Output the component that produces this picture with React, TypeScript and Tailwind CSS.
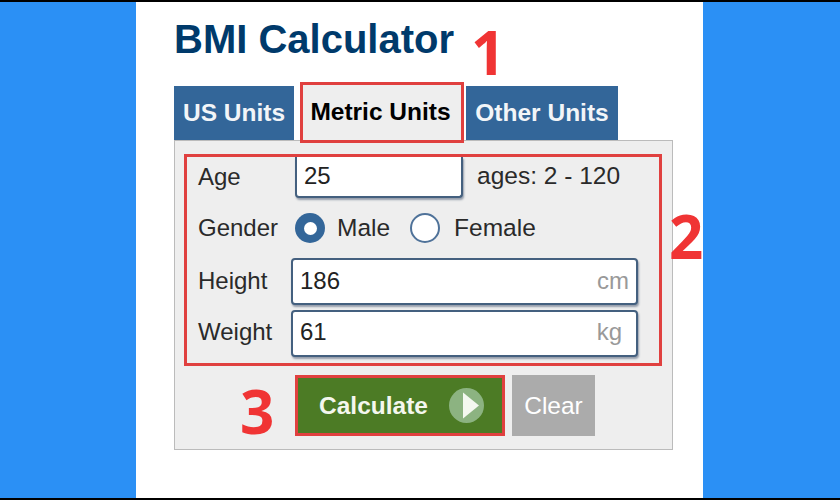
import React from "react";

const RED = "border-[#e0403f]";

// Text field with the unit shown at the right side.
const Field = ({ label, value, unit, extra }: { label: string; value: string; unit: string; extra: string }) => {
  return (
    <div className="flex items-center h-[47px]">
      <div className={`w-[104px] pl-[11px] text-[24px] text-[#2a2a2a] ${extra}`}>{label}</div>
      <div className={`w-[347px] h-[47px] bg-white border-2 border-[#44607f] rounded-[4px] shadow-[1px_2px_2px_rgba(40,60,90,0.45)] flex items-center justify-between pl-[7px] ${extra}`}>
        <span className="text-[24px] text-[#222]">{value}</span>
        <span className={`text-[24px] text-[#999] ${unit === "kg" ? "pr-[14px]" : "pr-[7px]"}`}>{unit}</span>
      </div>
    </div>
  );
};

const Radio = ({ checked }: { checked: boolean }) => {
  return checked ? (
    <span className="w-[30px] h-[30px] rounded-full bg-[#336699] flex items-center justify-center">
      <span className="w-[13px] h-[13px] rounded-full bg-white" />
    </span>
  ) : (
    <span className="w-[30px] h-[30px] rounded-full bg-white border-2 border-[#4f7299]" />
  );
};

export default function App() {
  return (
    <div className="w-[840px] h-[500px] bg-black py-[2px] font-['Liberation_Sans',Arial,sans-serif]">
      <div className="flex h-[496px]">
        <div className="w-[136px] bg-[#2b90f5]" />
        <div className="relative w-[567px] bg-white pl-[38px]">
          <h1 className="h-[80px] pt-[12px] text-[40px] leading-[50px] font-bold text-[#003a6b]">
            BMI Calculator
          </h1>

          {/* Tabs */}
          <div className="flex items-end h-[58px]">
            <div className="w-[120px] h-[54px] bg-[#336699] text-[#f2f5f8] text-[24.5px] font-bold flex items-center justify-center">
              US Units
            </div>
            <div className={`relative z-10 -mb-[3px] ml-[6px] w-[164px] h-[61px] bg-[#eeeeee] border-[3px] ${RED} pr-[3px] text-black text-[24.5px] font-bold flex items-center justify-center`}>
              Metric Units
            </div>
            <div className="ml-[2px] w-[152px] h-[54px] bg-[#336699] text-[#f2f5f8] text-[24.5px] font-bold flex items-center justify-center">
              Other Units
            </div>
          </div>

          {/* Form panel */}
          <div className="w-[499px] h-[310px] bg-[#eeeeee] border border-[#bbbbbb] pl-[9px] pt-[13px]">
            <div className={`w-[478px] h-[212px] border-[3px] ${RED}`}>
              <div className="flex items-center h-[41px]">
                <div className="w-[108px] pl-[11px] pb-[2px] text-[24px] text-[#2a2a2a]">Age</div>
                <div className="w-[168px] h-[41px] bg-white border-2 border-t-0 border-[#44607f] rounded-b-[4px] shadow-[1px_2px_2px_rgba(40,60,90,0.45)] flex items-center pl-[7px] pb-[2px] text-[24px] text-[#222]">
                  25
                </div>
                <div className="ml-[14px] pb-[2px] text-[24.5px] text-[#2a2a2a]">ages: 2 - 120</div>
              </div>
              <div className="flex items-center h-[60px]">
                <div className="w-[108px] pl-[11px] text-[24px] text-[#2a2a2a]">Gender</div>
                <Radio checked={true} />
                <span className="ml-[12px] text-[24.5px] text-[#2a2a2a]">Male</span>
                <span className="ml-[20px] flex">
                  <Radio checked={false} />
                </span>
                <span className="ml-[14px] text-[24.5px] text-[#2a2a2a]">Female</span>
              </div>
              <Field label="Height" value="186" unit="cm" extra="pb-[2px]" />
              <div className="mt-[5px]">
                <Field label="Weight" value="61" unit="kg" extra="pb-[4px]" />
              </div>
            </div>

            <div className="flex mt-[9px] ml-[111px]">
              <div className={`w-[210px] h-[61px] bg-[#4c7b25] border-[3px] ${RED} flex items-center pl-[21px]`}>
                <span className="pt-[1px] text-[24.5px] font-bold text-[#f4f7ee]">Calculate</span>
                <svg className="ml-[21px]" width="35" height="35" viewBox="0 0 35 35">
                  <circle cx="17.5" cy="17.5" r="17.5" fill="#8cb381" />
                  <path d="M14 4.5 L30 17.5 L14 30.5 Z" fill="#f4f8f0" />
                </svg>
              </div>
              <div className="ml-[7px] pt-[1px] w-[83px] h-[61px] bg-[#ababab] text-white text-[24.5px] flex items-center justify-center">
                Clear
              </div>
            </div>
          </div>

          {/* Step numbers drawn over the page */}
          <span className="absolute left-[335px] top-[15px] text-[60px] leading-[70px] font-bold text-[#f03434] font-['Open_Sans',sans-serif]">1</span>
          <span className="absolute left-[533px] top-[199px] text-[60px] leading-[70px] font-bold text-[#f03434] font-['Open_Sans',sans-serif]">2</span>
          <span className="absolute left-[104px] top-[374px] text-[60px] leading-[70px] font-bold text-[#f03434] font-['Open_Sans',sans-serif]">3</span>
        </div>
        <div className="flex-1 bg-[#2b90f5]" />
      </div>
    </div>
  );
}
